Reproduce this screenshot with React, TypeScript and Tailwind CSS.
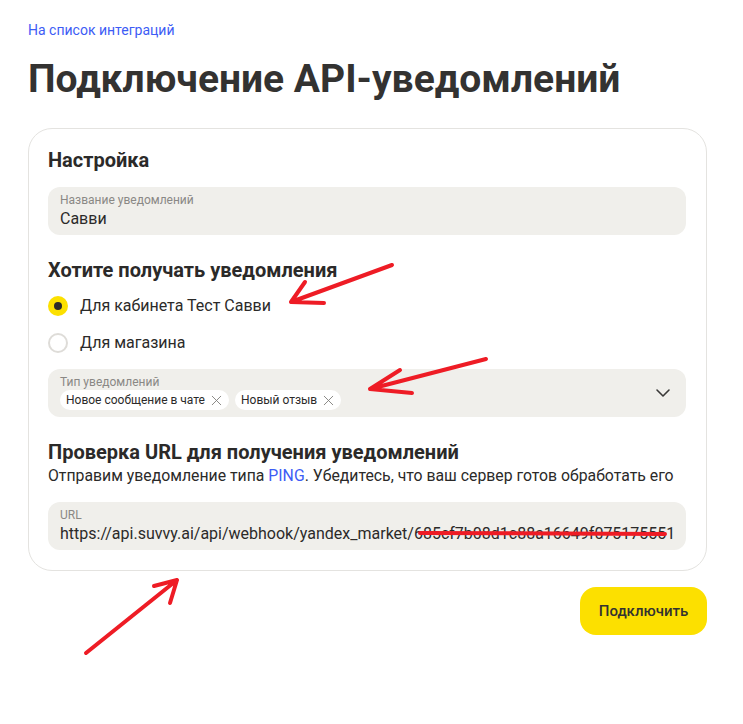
import { X, ChevronDown } from 'lucide-react'

const chips = ['Новое сообщение в чате', 'Новый отзыв']

function Field({ label, children }: { label: string; children: React.ReactNode }) {
  return (
    <div className="rounded-[12px] bg-[#f0efeb] pl-3 pr-3 pt-[6px] pb-[6px]">
      <div className="text-[12px] leading-[14px] text-[#8a8885]">{label}</div>
      <div className="mt-[2px]">{children}</div>
    </div>
  )
}

function Radio({ checked, label }: { checked?: boolean; label: string }) {
  return (
    <label className="flex items-center gap-3 h-6">
      {checked ? (
        <span className="w-5 h-5 rounded-full bg-[#fce000] flex items-center justify-center">
          <span className="w-2 h-2 rounded-full bg-[#2b2a29]" />
        </span>
      ) : (
        <span className="w-5 h-5 rounded-full border-2 border-[#dedcd8] bg-white" />
      )}
      <span className="text-[16px] leading-6 text-[#2b2a29]">{label}</span>
    </label>
  )
}

export default function App() {
  return (
    <div className="relative w-[743px] min-h-[724px] bg-white font-['Roboto',sans-serif] text-[#2b2a29]">
      <div className="pl-[28px] pr-[36px] pt-[22px] pb-10">
        <a className="block text-[14px] leading-4 text-[#3d5cf5]">На список интеграций</a>
        <h1 className="mt-[17px] text-[39px] leading-[48px] font-bold text-[#333231]">
          Подключение API-уведомлений
        </h1>

        {/* Card */}
        <div className="mt-[25px] rounded-[24px] border border-[#e4e3e0] pl-[19px] pr-5 pt-[17px] pb-5">
          <h2 className="text-[20px] leading-7 font-bold">Настройка</h2>
          <div className="mt-[13px]">
            <Field label="Название уведомлений">
              <div className="text-[16px] leading-5">Савви</div>
            </Field>
          </div>

          <h2 className="mt-[21px] text-[20px] leading-7 font-bold">Хотите получать уведомления</h2>
          <div className="mt-[10px] flex flex-col gap-[13px]">
            <Radio checked label="Для кабинета Тест Савви" />
            <Radio label="Для магазина" />
          </div>

          <div className="mt-[14px] rounded-[12px] bg-[#f0efeb] pl-3 pr-[11px] pt-[6px] pb-[7px] flex items-center">
            <div className="flex-1">
              <div className="text-[12px] leading-[14px] text-[#8a8885]">Тип уведомлений</div>
              <div className="mt-[1px] flex gap-[6px]">
                {chips.map((c) => (
                  <span key={c} className="flex items-center gap-[3px] h-5 rounded-full bg-white pl-[6px] pr-[4px] text-[12px] leading-5">
                    {c}
                    <X size={17} strokeWidth={1.25} className="text-[#7d7b78]" />
                  </span>
                ))}
              </div>
            </div>
            <ChevronDown size={24} strokeWidth={1.6} className="text-[#3a3938]" />
          </div>

          <h2 className="mt-[21px] text-[20px] leading-7 font-bold">Проверка URL для получения уведомлений</h2>
          <p className="text-[15.8px] leading-5 whitespace-nowrap">
            Отправим уведомление типа <span className="text-[#3d5cf5]">PING</span>. Убедитесь, что ваш сервер готов обработать его
          </p>
          <div className="mt-4">
            <Field label="URL">
              <div className="text-[16px] leading-5 whitespace-nowrap overflow-hidden">
                https://api.suvvy.ai/api/webhook/yandex_market/685cf7b08d1c88a16649f075175551
              </div>
            </Field>
          </div>
        </div>

        <div className="mt-4 flex justify-end">
          <button className="h-12 w-[127px] rounded-[16px] bg-[#fce000] text-[15px] font-medium text-[#333231]">
            Подключить
          </button>
        </div>
      </div>

      {/* red hand-drawn annotations */}
      <svg className="absolute inset-0 pointer-events-none" width="743" height="724" viewBox="0 0 743 724">
        <g stroke="#ee1c25" strokeWidth="4" strokeLinecap="round" strokeLinejoin="round" fill="none">
          <path d="M392 265 L291 302 M291 302 L305 282 M291 302 L324 303" />
          <path d="M486 359 L370 389 M370 389 L400 370 M370 389 L412 393" />
          <path d="M86 653 L177 580 M177 580 L154 586 M177 580 L170 603" />
          <path d="M420 533 L665 534" />
        </g>
      </svg>
    </div>
  )
}
